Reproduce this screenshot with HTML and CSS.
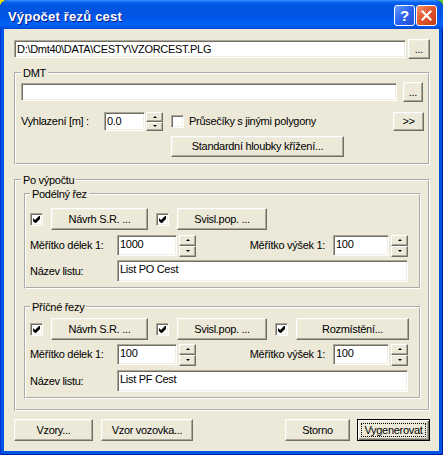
FILE: index.html
```html
<!DOCTYPE html>
<html lang="cs">
<head>
<meta charset="utf-8">
<title>Výpočet řezů cest</title>
<link rel="stylesheet" href="styles.css">
</head>
<body>
<div class="win">
  <div class="titlebar">
    <span class="title">Výpočet řezů cest</span>
    <span class="tb help">?</span>
    <span class="tb close"><svg width="11" height="11" viewBox="0 0 11 11"><path d="M1.5 1.5L9.5 9.5M9.5 1.5L1.5 9.5" stroke="#fff" stroke-width="2.2" stroke-linecap="square"/></svg></span>
  </div>
  <div class="client">
    <div class="row r-path">
      <div class="edit grow e-path">D:\Dmt40\DATA\CESTY\VZORCEST.PLG</div>
      <button class="btn b-dots">...</button>
    </div>

    <fieldset class="grp g-dmt">
      <legend>DMT</legend>
      <div class="row r-dmt1">
        <div class="edit grow e-dmt"></div>
        <button class="btn b-dots2">...</button>
      </div>
      <div class="row r-dmt2">
        <span class="lbl l-vyh">Vyhlazení [m] :</span>
        <div class="edit e-vyh">0.0</div>
        <div class="spin"><span class="sb"><i class="up"></i></span><span class="sb"><i class="dn"></i></span></div>
        <span class="cb cb-pr"></span>
        <span class="cbl">Průsečíky s jinými polygony</span>
        <button class="btn b-more">&gt;&gt;</button>
      </div>
      <div class="row r-dmt3">
        <button class="btn b-std">Standardní hloubky křížení...</button>
      </div>
    </fieldset>

    <fieldset class="grp g-po">
      <legend>Po výpočtu</legend>

      <fieldset class="grp g-sub g-pod">
        <legend>Podélný řez</legend>
        <div class="row r1">
          <span class="cb"><svg width="7" height="7" viewBox="0 0 7 7"><path d="M0 2L2 4L6 0L7 0L7 3L3 7L2 7L0 5Z"/></svg></span>
          <button class="btn b-navrh">Návrh S.R. ...</button>
          <span class="cb"><svg width="7" height="7" viewBox="0 0 7 7"><path d="M0 2L2 4L6 0L7 0L7 3L3 7L2 7L0 5Z"/></svg></span>
          <button class="btn b-svisl">Svisl.pop. ...</button>
        </div>
        <div class="row r2">
          <span class="lbl l-mer">Měřítko délek 1:</span>
          <div class="edit e-del">1000</div>
          <div class="spin"><span class="sb"><i class="up"></i></span><span class="sb"><i class="dn"></i></span></div>
          <span class="lbl l-vys">Měřítko výšek 1:</span>
          <div class="edit e-vys">100</div>
          <div class="spin"><span class="sb"><i class="up"></i></span><span class="sb"><i class="dn"></i></span></div>
        </div>
        <div class="row r3">
          <span class="lbl l-mer">Název listu:</span>
          <div class="edit grow e-name">List PO Cest</div>
        </div>
      </fieldset>

      <fieldset class="grp g-sub g-pri">
        <legend>Příčné řezy</legend>
        <div class="row r1">
          <span class="cb"><svg width="7" height="7" viewBox="0 0 7 7"><path d="M0 2L2 4L6 0L7 0L7 3L3 7L2 7L0 5Z"/></svg></span>
          <button class="btn b-navrh">Návrh S.R. ...</button>
          <span class="cb"><svg width="7" height="7" viewBox="0 0 7 7"><path d="M0 2L2 4L6 0L7 0L7 3L3 7L2 7L0 5Z"/></svg></span>
          <button class="btn b-svisl">Svisl.pop. ...</button>
          <span class="cb"><svg width="7" height="7" viewBox="0 0 7 7"><path d="M0 2L2 4L6 0L7 0L7 3L3 7L2 7L0 5Z"/></svg></span>
          <button class="btn b-rozm">Rozmístění...</button>
        </div>
        <div class="row r2">
          <span class="lbl l-mer">Měřítko délek 1:</span>
          <div class="edit e-del">100</div>
          <div class="spin"><span class="sb"><i class="up"></i></span><span class="sb"><i class="dn"></i></span></div>
          <span class="lbl l-vys">Měřítko výšek 1:</span>
          <div class="edit e-vys">100</div>
          <div class="spin"><span class="sb"><i class="up"></i></span><span class="sb"><i class="dn"></i></span></div>
        </div>
        <div class="row r3">
          <span class="lbl l-mer">Název listu:</span>
          <div class="edit grow e-name">List PF Cest</div>
        </div>
      </fieldset>
    </fieldset>

    <div class="row r-bottom">
      <button class="btn b-vzory">Vzory...</button>
      <button class="btn b-vozovka">Vzor vozovka...</button>
      <button class="btn b-storno">Storno</button>
      <button class="btn b-gen">Vygenerovat</button>
    </div>
  </div>
</div>
</body>
</html>
```
FILE: styles.css
```css
* { box-sizing: border-box; }
html, body { margin: 0; padding: 0; }
body {
  width: 443px; height: 455px; overflow: hidden;
  background: linear-gradient(90deg, #f0e400 0, #f0e400 30px, #58cc2a 413px);
  font: 11px/13px "Liberation Sans", Arial, sans-serif;
  letter-spacing: -0.3px;
  color: #000;
}
.win {
  width: 443px; height: 455px;
  display: flex; flex-direction: column;
  background: #0054E3;
  border-radius: 8px 8px 0 0;
  box-shadow: inset 1px 0 #0831D9, inset -1px 0 #001EA0, inset 0 -1px #001EA0;
}
.titlebar {
  height: 29px; flex: none;
  display: flex; align-items: flex-start;
  padding: 5px 6px 0 8px;
  border-radius: 8px 8px 0 0;
  background: linear-gradient(180deg, #3D95FF 0, #0A66F2 2px, #0057E6 5px, #0053E1 12px, #005AEC 20px, #0062F6 24px, #0056E8 27px, #0046CF 29px);
}
.title {
  flex: 1;
  color: #fff;
  font: bold 13px/15px "Liberation Sans", Arial, sans-serif;
  letter-spacing: 0.2px;
  padding-top: 4px;
  text-shadow: 1px 1px #0A1A8C;
}
.tb {
  width: 21px; height: 21px; flex: none;
  border: 1px solid #fff; border-radius: 3px;
  display: flex; align-items: center; justify-content: center;
}
.help {
  margin-right: 1px;
  background: linear-gradient(135deg, #6B9CFF 0, #2F66EE 45%, #1F4FD8 100%);
  color: #fff;
  font: bold 15px/1 "Liberation Sans", Arial, sans-serif;
  letter-spacing: 0;
}
.close {
  background: linear-gradient(135deg, #F2946C 0, #E2582E 45%, #C53C14 100%);
}
.client {
  flex: 1;
  margin: 0 4px 4px;
  background: #ECE9D8;
  padding: 10px 9px 0 10px;
  display: flex; flex-direction: column;
}
.row { display: flex; align-items: center; }
.grow { flex: 1; min-width: 0; }

.edit {
  background: #fff;
  border: 1px solid;
  border-color: #ACA899 #fff #fff #ACA899;
  box-shadow: inset 1px 1px #716F64, inset -1px -1px #F1EFE2;
  padding: 2px 1px 0 2px;
  white-space: nowrap; overflow: hidden;
  flex: none;
}
.edit.grow { flex: 1; }
.btn {
  font: inherit; color: #000;
  letter-spacing: inherit;
  background: #ECE9D8;
  border: 1px solid;
  border-color: #fff #716F64 #716F64 #fff;
  box-shadow: inset -1px -1px #ACA899, inset 1px 1px #F1EFE2;
  margin: 0; padding: 0;
  display: flex; align-items: center; justify-content: center;
  flex: none;
  height: 22px;
  white-space: nowrap;
}
.cb {
  width: 13px; height: 13px; flex: none;
  background: #fff;
  border: 1px solid;
  border-color: #ACA899 #fff #fff #ACA899;
  box-shadow: inset 1px 1px #716F64, inset -1px -1px #F1EFE2;
  display: flex; align-items: center; justify-content: center;
}
.cb svg { fill: #000; }
.spin {
  width: 17px; flex: none;
  display: flex; flex-direction: column;
  margin-left: 2px;
}
.sb {
  flex: 1;
  background: #ECE9D8;
  border: 1px solid;
  border-color: #fff #716F64 #716F64 #fff;
  box-shadow: inset -1px -1px #ACA899;
  display: flex; align-items: center; justify-content: center;
}
.sb i { display: block; width: 0; height: 0; border-left: 2px solid transparent; border-right: 2px solid transparent; }
.sb .up { border-bottom: 2px solid #000; }
.sb .dn { border-top: 2px solid #000; }
.lbl { flex: none; white-space: nowrap; }

/* group boxes */
.grp {
  margin: 0;
  border: 2px groove #fff;
  min-width: 0;
}
.grp > legend {
  padding: 0 2px;
  line-height: 12px;
}

/* path row */
.r-path { height: 20px; }
.e-path { height: 18px; }
.b-dots { width: 22px; height: 20px; margin-left: 2px; }

/* DMT */
.g-dmt { margin-top: 8px; padding: 0 5px 6px 5px; }
.r-dmt1 { margin-top: 3px; height: 20px; }
.e-dmt { height: 18px; }
.b-dots2 { width: 20px; height: 20px; margin-left: 6px; }
.r-dmt2 { margin-top: 10px; height: 19px; }
.l-vyh { width: 83px; }
.e-vyh { width: 41px; height: 19px; }
.r-dmt2 .spin { height: 19px; margin-left: 1px; }
.cb-pr { margin-left: 8px; }
.cbl { margin-left: 5px; white-space: nowrap; }
.b-more { width: 31px; height: 19px; margin-left: auto; margin-right: -1px; }
.r-dmt3 { margin-top: 5px; }
.b-std { width: 173px; height: 21px; margin-left: 150px; }

/* Po výpočtu */
.g-po { margin-top: 9px; padding: 2px 7px 10px 8px; }
.g-po > legend { margin-left: -3px; }
.g-sub { padding: 0 11px 5px 4px; }
.g-pri { margin-top: 12px; }
.g-pod .r1 { margin-top: 8px; }
.g-pri .r1 { margin-top: 5px; }
.r1 { height: 22px; }
.r1 .btn { margin-left: 8px; }
.r1 .cb { margin-left: 8px; }
.r1 .cb:first-child { margin-left: 0; }
.b-navrh { width: 97px; }
.b-svisl { width: 90px; }
.b-rozm { width: 113px; }
.r2 { margin-top: 5px; height: 21px; }
.g-pri .r2 { margin-top: 4px; }
.r2 .edit { height: 21px; }
.r2 .spin { height: 22px; }
.l-mer { width: 87px; }
.e-del { width: 60px; }
.l-vys { margin-left: auto; margin-right: 8px; }
.e-vys { width: 56px; }
.r3 { margin-top: 4px; height: 22px; }
.g-pri .r3 { margin-top: 5px; }
.e-name { height: 22px; }

/* bottom */
.r-bottom { margin-top: 8px; }
.b-vzory { width: 79px; }
.b-vozovka { width: 92px; margin-left: 8px; }
.b-storno { width: 65px; margin-left: auto; }
.b-gen {
  width: 73px; margin-left: 7px;
  position: relative;
  border: 1px solid #000;
  box-shadow: inset 1px 1px #fff, inset -1px -1px #716F64, inset -2px -2px #ACA899;
}
.b-gen::after {
  content: "";
  position: absolute;
  inset: 3px;
  border: 1px dotted #000;
}
```
